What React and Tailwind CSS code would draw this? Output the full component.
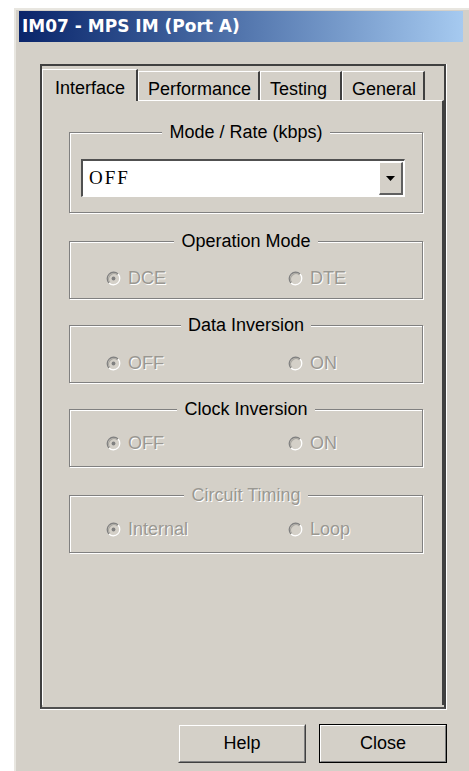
import React from 'react';

const ui = { fontFamily: '"Liberation Sans", Arial, sans-serif' };

// classic 3d radio, drawn in a 14px box
function RadioDot({ checked }) {
  return (
    <svg width="15" height="15" viewBox="0 0 14 14" className="shrink-0">
      <circle cx="7" cy="7" r="5.5" fill="#d4d0c8" />
      <path d="M2.76 11.24 A6 6 0 0 1 11.24 2.76" stroke="#808080" strokeWidth="1.2" fill="none" />
      <path d="M11.24 2.76 A6 6 0 0 1 2.76 11.24" stroke="#ffffff" strokeWidth="1.2" fill="none" />
      <path d="M3.5 10.5 A5 5 0 0 1 10.5 3.5" stroke="#a8a6a0" strokeWidth="1" fill="none" />
      {checked && <circle cx="7" cy="7" r="1.8" fill="#808080" />}
    </svg>
  );
}

function Radio({ checked, label }) {
  return (
    <div className="flex items-center gap-[7px]">
      <RadioDot checked={checked} />
      <span className="text-[18px] leading-none text-[#9a9892] [text-shadow:1px_1px_0_#ffffff]">{label}</span>
    </div>
  );
}

function GroupBox({ title, disabled, className, children }) {
  return (
    <div className={`relative mx-[26px] mr-[19px] border border-[#808080] shadow-[inset_1px_1px_0_#ffffff,1px_1px_0_#ffffff] ${className}`}>
      <div className="absolute -top-[12px] left-0 right-0 flex justify-center">
        <span
          className={`bg-[#d4d0c8] px-[7px] text-[18px] leading-[22px] ${
            disabled ? 'text-[#9a9892] [text-shadow:1px_1px_0_#ffffff]' : 'text-black'
          }`}
        >
          {title}
        </span>
      </div>
      {children}
    </div>
  );
}

function RadioGroup({ title, a, b, disabled, className, rowTop }) {
  return (
    <GroupBox title={title} disabled={disabled} className={`h-[58px] ${className}`}>
      <div className={`grid grid-cols-[182px_1fr] pl-[36px] ${rowTop}`}>
        <Radio checked label={a} />
        <Radio label={b} />
      </div>
    </GroupBox>
  );
}

function Tab({ label, active, w }) {
  if (active) {
    return (
      <div
        className={`relative z-10 -mb-[1px] h-[32px] ${w} border-t border-l border-white border-r-2 border-r-[#404040] bg-[#d4d0c8] pl-[12px] pt-[5px] text-[18px]`}
      >
        {label}
      </div>
    );
  }
  return (
    <div
      className={`mt-[2px] h-[29px] ${w} border-t border-l border-white border-r-2 border-r-[#404040] bg-[#d4d0c8] pl-[9px] pt-[4px] text-[18px]`}
    >
      {label}
    </div>
  );
}

function Button({ label, primary }) {
  const inner = (
    <div className="flex h-full w-full items-center justify-center border-t border-l border-white border-r border-b border-r-[#808080] border-b-[#808080] text-[18px]">
      {label}
    </div>
  );
  return (
    <div
      className={`h-[39px] w-[128px] bg-[#d4d0c8] ${
        primary ? 'border border-black' : 'border-r border-b border-[#404040] border-t-[#d4d0c8] border-l-[#d4d0c8] border-t border-l'
      }`}
    >
      {inner}
    </div>
  );
}

export default function App() {
  return (
    <div className="h-[771px] w-[469px] overflow-hidden bg-white" style={ui}>
      <div className="ml-[14px] mt-[8px] h-[770px] w-[456px] border-t-2 border-l-2 border-t-[#e8e6e0] border-l-[#e8e6e0] bg-[#d4d0c8] pl-[3px] pt-[1px]">
        {/* title bar */}
        <div className="flex h-[31px] w-[444px] items-center bg-gradient-to-r from-[#0a246a] to-[#a6caf0] pl-[3px]">
          <span
            className="text-[17px] font-bold text-white"
            style={{ fontFamily: '"DejaVu Sans", Verdana, sans-serif' }}
          >
            IM07 - MPS IM (Port A)
          </span>
        </div>

        {/* tab control frame */}
        <div className="ml-[21px] mt-[22px] w-[407px] border-r border-b border-white">
          <div className="h-[645px] border-2 border-[#404040] border-b-[#505050] pt-[2px]">
            <div className="flex h-[32px] items-end">
              <Tab label="Interface" active w="w-[96px]" />
              <Tab label="Performance" w="w-[122px]" />
              <Tab label="Testing" w="w-[82px]" />
              <Tab label="General" w="w-[83px]" />
            </div>

            {/* page */}
            <div className="h-[605px] border-t border-l border-white border-r-2 border-r-[#404040] bg-[#d4d0c8]">
              <GroupBox title="Mode / Rate (kbps)" className="mt-[31px] h-[81px]">
                <div className="ml-[11px] mr-[17px] mt-[26px] flex h-[38px] border-t-2 border-l-2 border-t-[#505050] border-l-[#505050] border-r border-b border-white bg-white">
                  <div
                    className="flex flex-1 items-center pl-[6px] text-[19px] tracking-[2px] text-black"
                    style={{ fontFamily: '"Liberation Serif", "Times New Roman", serif' }}
                  >
                    OFF
                  </div>
                  <div className="m-[1px] flex w-[24px] items-center justify-center border-t border-l border-white border-r-2 border-b-2 border-r-[#606060] border-b-[#606060] bg-[#d4d0c8]">
                    <svg width="9" height="5" viewBox="0 0 9 5">
                      <path d="M0 0 H9 L4.5 5 Z" fill="#000" />
                    </svg>
                  </div>
                </div>
              </GroupBox>

              <RadioGroup title="Operation Mode" a="DCE" b="DTE" className="mt-[28px]" rowTop="pt-[27px]" />
              <RadioGroup title="Data Inversion" a="OFF" b="ON" className="mt-[26px]" rowTop="pt-[28px]" />
              <RadioGroup title="Clock Inversion" a="OFF" b="ON" className="mt-[26px]" rowTop="pt-[24px]" />
              <RadioGroup title="Circuit Timing" a="Internal" b="Loop" disabled className="mt-[28px]" rowTop="pt-[24px]" />
            </div>
          </div>
        </div>

        <div className="ml-[21px] mt-[14px] flex w-[407px] justify-end gap-[13px]">
          <Button label="Help" />
          <Button label="Close" primary />
        </div>
      </div>
    </div>
  );
}
